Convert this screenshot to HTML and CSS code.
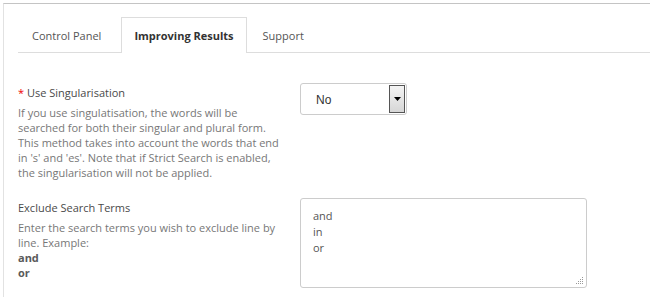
FILE: index.html
```html
<!DOCTYPE html>
<html>
<head>
<meta charset="utf-8">
<link rel="stylesheet" href="styles.css">
</head>
<body>
<div class="panel">
  <ul class="tabs">
    <li class="tab">Control Panel</li>
    <li class="tab active">Improving Results</li>
    <li class="tab">Support</li>
  </ul>
  <div class="form">
    <div class="row row-first">
      <div class="info">
        <div class="label"><span class="req">*</span> Use Singularisation</div>
        <div class="desc">If you use singulatisation, the words will be searched for both their singular and plural form. This method takes into account the words that end in 's' and 'es'. Note that if Strict Search is enabled, the singularisation will not be applied.</div>
      </div>
      <div class="control">
        <div class="select">
          <span class="select-value">No</span>
          <span class="select-btn">
            <svg width="7" height="4" viewBox="0 0 7 4"><path d="M0 0H7L3.5 4Z" fill="#000"/></svg>
          </span>
        </div>
      </div>
    </div>
    <div class="row row-second">
      <div class="info">
        <div class="label">Exclude Search Terms</div>
        <div class="desc">Enter the search terms you wish to exclude line by line. Example:<br><b>and</b><br><b>or</b></div>
      </div>
      <div class="control">
        <div class="ta-wrap">
          <textarea class="ta">and
in
or</textarea>
          <svg class="grip" width="9" height="9" viewBox="0 0 9 9">
            <rect x="7" y="1" width="1" height="1" fill="#999"/>
            <rect x="5" y="3" width="1" height="1" fill="#999"/>
            <rect x="7" y="3" width="1" height="1" fill="#999"/>
            <rect x="3" y="5" width="1" height="1" fill="#999"/>
            <rect x="5" y="5" width="1" height="1" fill="#999"/>
            <rect x="7" y="5" width="1" height="1" fill="#999"/>
            <rect x="1" y="7" width="1" height="1" fill="#999"/>
            <rect x="3" y="7" width="1" height="1" fill="#999"/>
            <rect x="5" y="7" width="1" height="1" fill="#999"/>
            <rect x="7" y="7" width="1" height="1" fill="#999"/>
          </svg>
        </div>
      </div>
    </div>
  </div>
</div>
</body>
</html>
```

FILE: styles.css
```css
html, body {
  margin: 0;
  padding: 0;
  background: #fff;
}
body {
  font-family: "Open Sans", "Liberation Sans", sans-serif;
  font-size: 11px;
  color: #666;
  overflow: hidden;
  height: 297px;
}
.panel {
  margin: 3px 0 0 3px;
  border-top: 1px solid #c4c4c4;
  border-left: 1px solid #e2e2e2;
  padding: 13px 0 0 14px;
  height: 300px;
  box-sizing: border-box;
}
.tabs {
  list-style: none;
  margin: 0;
  padding: 0;
  display: flex;
  border-bottom: 1px solid #ddd;
  height: 35px;
}
.tab {
  font-size: 11px;
  color: #555;
  padding: 0 17px 0 13px;
  line-height: 35px;
  height: 35px;
  border: 1px solid transparent;
  border-bottom: none;
  box-sizing: border-box;
  margin-right: 2px;
}
.tab.active {
  color: #333;
  font-weight: bold;
  background: #fff;
  border-color: #ddd;
  height: 36px;
  padding: 0 12px 0 12px;
  margin-right: 2px;
}
.form {
  padding-top: 32px;
}
.row {
  display: flex;
}
.info {
  width: 268px;
  margin-right: 14px;
}
.label {
  color: #4a4a4a;
  font-size: 11px;
  line-height: 15px;
}
.req {
  color: #e00;
}
.desc {
  margin-top: 5px;
  line-height: 15px;
  color: #777;
}
.desc b {
  color: #5a5a5a;
}
.row-second {
  margin-top: 20px;
}
.select {
  margin-top: -2px;
  width: 107px;
  height: 32px;
  border: 1px solid #ccc;
  border-radius: 3px;
  box-sizing: border-box;
  display: flex;
  align-items: center;
  justify-content: space-between;
  background: #fff;
}
.select-value {
  font-family: "Liberation Sans", Arial, sans-serif;
  font-size: 12px;
  color: #333;
  padding-left: 15px;
  padding-top: 1px;
}
.select-btn {
  width: 16px;
  height: 28px;
  margin-right: 1px;
  border: 1px solid #555;
  box-sizing: border-box;
  background: linear-gradient(#f4f4f4, #d6d6d6);
  display: flex;
  align-items: center;
  justify-content: center;
}
.ta-wrap {
  position: relative;
  margin-top: -2px;
  width: 287px;
  height: 90px;
}
.ta {
  display: block;
  width: 287px;
  height: 90px;
  box-sizing: border-box;
  border: 1px solid #ccc;
  border-radius: 3px;
  padding: 9px 12px;
  font-family: "Open Sans", "Liberation Sans", sans-serif;
  font-size: 11px;
  line-height: 16px;
  color: #555;
  resize: none;
  outline: none;
  margin: 0;
}
.grip {
  position: absolute;
  right: 3px;
  bottom: 3px;
}
```
